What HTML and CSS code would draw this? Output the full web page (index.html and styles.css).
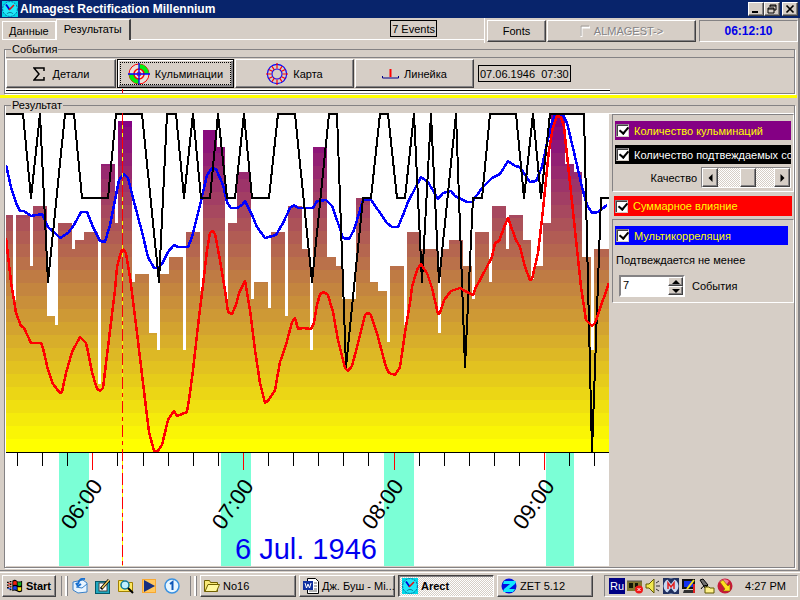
FILE: index.html
```html
<!DOCTYPE html>
<html lang="ru">
<head>
<meta charset="utf-8">
<title>Almagest Rectification Millennium</title>
<link rel="stylesheet" href="styles.css">
</head>
<body>
<svg class="defs" aria-hidden="true">
  <symbol id="clock" viewBox="0 0 16 16">
    <rect width="16" height="16" fill="#00d8e8"/>
    <circle cx="8" cy="8" r="7.4" fill="#20e8f8" stroke="#0868a0" stroke-dasharray="2 1"/>
    <path d="M4 3.500L7.500 8.500" fill="none" stroke="#0000d0" stroke-width="1.800"/>
    <path d="M7 9L12 4" stroke="#e01010" stroke-width="1.600"/>
    <path d="M5 13c1-2 5-2 6 0" fill="none" stroke="#087898"/>
  </symbol>
</svg>

<header class="titlebar">
  <svg class="app-icon"><use href="#clock"/></svg>
  <h1>Almagest Rectification Millennium</h1>
  <div class="window-buttons">
    <button class="raised" type="button" aria-label="Minimize"><svg viewBox="0 0 12 10"><path d="M2 8h6" stroke="#000" stroke-width="2"/></svg></button>
    <button class="raised" type="button" aria-label="Restore"><svg viewBox="0 0 12 10"><path d="M4 3V1h6v5H8M4 2h6M2 4h6v5H2zM2 5h6" fill="none" stroke="#000"/></svg></button>
    <button class="raised close" type="button" aria-label="Close"><svg viewBox="0 0 12 10"><path d="M2.500 1.500l7 7M9.500 1.500l-7 7" stroke="#000" stroke-width="1.700"/></svg></button>
  </div>
</header>

<main class="window">
  <div class="top-row">
    <nav class="tabs">
      <button class="tab" type="button">Данные</button>
      <button class="tab active" type="button">Результаты</button>
    </nav>
    <div class="tab-rest"><span class="boxed">7 Events</span></div>
    <div class="tools">
      <button class="raised fonts" type="button">Fonts</button>
      <button class="raised almagest" type="button" disabled><svg viewBox="0 0 10 12"><path d="M1.500 12V2.500H10" fill="none" stroke="#fff" stroke-width="2"/><path d="M1 11V1h8" fill="none" stroke="#a09c98"/></svg>ALMAGEST-&gt;</button>
      <output class="time">06:12:10</output>
    </div>
  </div>

  <fieldset class="events">
    <legend>События</legend>
    <div class="event-panel">
      <div class="event-buttons">
        <button class="raised details" type="button"><svg class="sigma" viewBox="0 0 12 14"><path d="M11 4V1H1l5 6-5 6h10v-3" fill="none" stroke="#000" stroke-width="1.500"/></svg>Детали</button>
        <button class="raised focused" type="button"><svg viewBox="0 0 22 22"><circle cx="11" cy="11" r="10" fill="#e8e0d8" stroke="#f00"/><path d="M11 1a10 10 0 0 1 10 10h-5a5 5 0 0 0-5-5zM11 21A10 10 0 0 1 1 11h5a5 5 0 0 0 5 5z" fill="#0e1"/><circle cx="11" cy="11" r="5" fill="none" stroke="#f00" stroke-width="1.500"/><circle cx="11" cy="11" r="2" fill="none" stroke="#f00"/><path d="M11 0v22M0 11h22" stroke="#00f" stroke-width="1.300"/></svg>Кульминации</button>
        <button class="raised" type="button"><svg viewBox="0 0 24 24"><circle cx="12" cy="12" r="10.500" fill="none" stroke="#00f" stroke-width="1.200"/><circle cx="12" cy="12" r="5.500" fill="none" stroke="#00f" stroke-width="1.200"/><path d="M12 0v6M12 18v6M0 12h6M18 12h6M6.500 3.500l2.500 4M17.500 3.500l-2.500 4M6.500 20.500l2.500-4M17.500 20.500l-2.500-4M3 7l4 2M21 7l-4 2M3 17l4-2M21 17l-4-2" stroke="#f00" stroke-width="1.300"/></svg>Карта</button>
        <button class="raised" type="button"><svg class="ruler" viewBox="0 0 17 10"><path d="M.5 7v2h16V7" fill="none" stroke="#008"/><path d="M8.500 0v8" stroke="#f00" stroke-width="2"/></svg>Линейка</button>
      </div>
      <time class="boxed">07.06.1946&nbsp; 07:30</time>
    </div>
    <div class="strip"><i></i></div>
  </fieldset>

  <div class="yellow-rule"></div>

  <fieldset class="result">
    <legend>Результат</legend>
    <div class="work">
      <svg id="chart" class="chart" viewBox="6 113 603 453" role="img" aria-label="6 Jul. 1946"></svg>
      <aside class="side">
        <section class="group">
          <label class="series purple"><input type="checkbox" checked>Количество кульминаций</label>
          <label class="series black"><input type="checkbox" checked>Количество подтвеждаемых со</label>
          <div class="quality">
            <label for="quality">Качество</label>
            <div class="scrollbar">
              <button class="raised" type="button" aria-label="−"><svg viewBox="0 0 5 8"><path d="M4.500 0v8L.5 4z"/></svg></button>
              <input id="quality" type="range" min="0" max="100" value="56">
              <button class="raised" type="button" aria-label="+"><svg viewBox="0 0 5 8"><path d="M.5 0v8l4-4z"/></svg></button>
            </div>
          </div>
        </section>
        <label class="series red"><input type="checkbox" checked>Суммарное влияние</label>
        <section class="group multi">
          <label class="series blue"><input type="checkbox" checked>Мультикорреляция</label>
          <label class="confirm" for="count">Подтвеждается не менее</label>
          <div class="count">
            <div class="spinner">
              <input id="count" type="text" value="7">
              <div class="spin">
                <button class="raised" type="button" aria-label="Больше"><svg viewBox="0 0 8 4"><path d="M0 4h8L4 0z"/></svg></button>
                <button class="raised" type="button" aria-label="Меньше"><svg viewBox="0 0 8 4"><path d="M0 0h8L4 4z"/></svg></button>
              </div>
            </div>
            <span>События</span>
          </div>
        </section>
      </aside>
    </div>
  </fieldset>
</main>

<footer class="taskbar">
  <button class="raised start" type="button"><svg viewBox="0 0 18 16"><path d="M0 4h2M0 7h2M0 10h2M3 3h2M3 6h2M3 9h2M3 12h2" stroke="#000" stroke-width="1.500"/><path d="M6 2q3-2 5 0t6 0v12q-3 2-6 0t-5 0z"/><path d="M7 3q2-1 4 0v4q-2-1-4 0z" fill="#f02010"/><path d="M12 3.500q2 1 4 0v4q-2 1-4 0z" fill="#10b020"/><path d="M7 8.500q2-1 4 0v4q-2-1-4 0z" fill="#1040f0"/><path d="M12 9q2 1 4 0v4q-2 1-4 0z" fill="#f8e010"/><path d="M1 5h4M1 8h4" stroke="#f02010"/><path d="M1 11h4" stroke="#1040f0"/></svg>Start</button>
  <div class="divider"></div>
  <div class="quick">
    <button type="button" aria-label="Outlook"><svg viewBox="0 0 16 16"><path d="M1 4l10-2 4 3v9l-9 1-5-3z" fill="#e8f4ff" stroke="#3880c8"/><path d="M4 9l6 1 5-4" fill="none" stroke="#3880c8"/><path d="M13 1q-6-1-7 5M4 5l2 3 3-2" fill="none" stroke="#1870d0" stroke-width="2"/></svg></button>
    <button type="button" aria-label="Desktop"><svg viewBox="0 0 16 16"><rect x=".5" y="3.500" width="14" height="12" fill="#20a8c0" stroke="#045868"/><rect x="4" y="5" width="8" height="8" fill="#fff" stroke="#444"/><path d="M6 11l8-9" stroke="#000" stroke-width="3"/><path d="M7 10l7-8" stroke="#f0d060" stroke-width="1.500"/></svg></button>
    <button type="button" aria-label="Search"><svg viewBox="0 0 16 16"><path d="M.5 13.500v-11h5l1 2h8v9z" fill="#ffe860" stroke="#a08000"/><circle cx="7" cy="7" r="4" fill="#c0f0ff" stroke="#107898" stroke-width="1.500"/><path d="M10 10l5 5" stroke="#000" stroke-width="2"/></svg></button>
    <button type="button" aria-label="Player"><svg viewBox="0 0 16 16"><path d="M1 1h14v14H1z" fill="#f8a830"/><path d="M2 2h12v12H2z" fill="#ffc860"/><path d="M3 2l11 6-11 6z" fill="#183080"/></svg></button>
    <button type="button" aria-label="1"><svg viewBox="0 0 16 16"><circle cx="8" cy="8" r="7" fill="#e8f6ff" stroke="#3890e0" stroke-width="1.500"/><path d="M6 6l2.500-2v8" fill="none" stroke="#1058b8" stroke-width="2"/></svg></button>
  </div>
  <div class="divider"></div>
  <div class="tasks">
    <button class="raised" type="button"><svg viewBox="0 0 16 16"><path d="M.5 13.500v-11h5l1 2h7v9z" fill="#f8e878" stroke="#706000"/><path d="M1 13.500l3-7h11.500l-3 7z" fill="#fff8a0" stroke="#706000"/></svg>No16</button>
    <button class="raised" type="button"><svg viewBox="0 0 16 16"><path d="M4.500.5h8l3 3v12h-11z" fill="#fff" stroke="#000"/><path d="M11 5h3M11 8h3M11 11h3M6 13h8" stroke="#666"/><path d="M0 3h10v9H0z" fill="#1030a0"/><path d="M2 5l1.500 5L5 6l1.500 4L8 5" fill="none" stroke="#fff"/></svg>Дж. Буш - Mi...</button>
    <button class="raised current" type="button"><svg><use href="#clock"/></svg>Arect</button>
    <button class="raised" type="button"><svg viewBox="0 0 16 16"><circle cx="8" cy="8" r="7.500" fill="#0010e0"/><path d="M3 3h12l-1 3-6 5h6l-2 3H2l1-3 6-5H2z" fill="#10e8ff"/></svg>ZET 5.12</button>
  </div>
  <div class="tray">
    <span class="lang">Ru</span>
    <svg viewBox="0 0 16 16"><path d="M0 3h15v10H0z" fill="#807830"/><path d="M2 5h4v5H2zM8 5h3v4H8z" fill="#101808"/><path d="M0 3h15" stroke="#555"/><circle cx="12" cy="11.500" r="4" fill="#f01818"/><path d="M10.500 10l3 3M13.500 10l-3 3" stroke="#fff"/></svg>
    <svg viewBox="0 0 16 16"><path d="M1 6h3l5-5v14l-5-5H1z" fill="#f0e850" stroke="#605800"/><path d="M11 5l3-2M11 8h4M11 11l3 2" stroke="#333"/></svg>
    <svg viewBox="0 0 16 16"><path d="M0 0h16v16H0z" fill="#203060"/><circle cx="8" cy="8" r="7.500" fill="#c8d8f0"/><path d="M4 1l4 5 4-5M4 15l4-5 4 5" fill="#203060"/><path d="M5 11V5l3 4 3-4v6" fill="none" stroke="#e02020" stroke-width="1.500"/></svg>
    <svg viewBox="0 0 16 16"><path d="M1 1h13v10H1z" fill="#101010"/><path d="M3 3h9v6H3z" fill="#1030f0"/><path d="M3 12h9l2 3H2z" fill="#303030"/><path d="M6 11l7-9" stroke="#f0e020" stroke-width="2"/><path d="M13 6v9" stroke="#e02020" stroke-width="2"/></svg>
    <svg viewBox="0 0 16 16"><path d="M1 2l3-1 5 6-3 3z" fill="#707070" stroke="#000"/><path d="M2 11q3-5 7-3" fill="none" stroke="#000"/><path d="M6 9h4l1 1h4v5H6z" fill="#fff088" stroke="#605800"/></svg>
    <svg viewBox="0 0 16 16"><circle cx="8" cy="8" r="7.500" fill="#c81838"/><path d="M2 4q5-5 10-1l-2 3z" fill="#f08098"/><path d="M3 4l3-2 5 6 2-2v7H6l2-2z" fill="#ffe020" stroke="#806000" stroke-width=".6"/></svg>
    <time>4:27 PM</time>
  </div>
</footer>
<script src="chart.js"></script>
</body>
</html>
```
FILE: styles.css
```css
:root {
  --face: #d6cec6;
  --shade: #848284;
  --dark: #424142;
  --light: #ffffff;
}

* { box-sizing: border-box; }

body {
  margin: 0;
  min-height: 100vh;
  display: flex;
  flex-direction: column;
  background: var(--face);
  color: #000;
  font: 11px/12px "Liberation Sans", Arial, sans-serif;
}

button, input {
  font: inherit;
  color: inherit;
  margin: 0;
  padding: 0;
}

button {
  border: 0;
  background: transparent;
  white-space: nowrap;
}

svg { display: block; flex: none; }
.defs { position: absolute; width: 0; height: 0; }

.raised {
  display: flex;
  align-items: center;
  justify-content: center;
  background: var(--face);
  border: 1px solid;
  border-color: var(--light) var(--dark) var(--dark) var(--light);
  box-shadow: inset -1px -1px 0 var(--shade);
}

.boxed {
  border: 1px solid #000;
  padding: 1px;
  height: 17px;
  line-height: 14px;
  white-space: pre;
}

/* Title bar */
.titlebar {
  display: flex;
  align-items: center;
  height: 18px;
  padding: 0 2px;
  background: #08246b;
  color: #fff;
}
.app-icon { width: 16px; height: 16px; }
.titlebar h1 {
  flex: 1;
  margin: 0 0 0 2px;
  font-size: 12px;
  font-weight: bold;
}
.window-buttons { display: flex; }
.window-buttons button { width: 16px; height: 14px; }
.window-buttons svg { width: 12px; height: 10px; }
.window-buttons .close { margin-left: 2px; }

/* Window body */
.window {
  flex: 1;
  display: flex;
  flex-direction: column;
  border-right: 2px solid var(--shade);
  border-bottom: 1px solid var(--shade);
  padding: 0 3px 2px 4px;
}

.top-row { display: flex; height: 25px; margin-right: -3px; }
.tabs { display: flex; align-items: flex-end; height: 22px; margin-left: -2px; }
.tab {
  height: 19px;
  padding: 0 6px;
  border: 1px solid var(--light);
}
.tab.active {
  height: 21px;
  padding: 0 7px 3px;
  border-bottom: 0;
  border-right: 2px solid var(--dark);
}
.tab-rest {
  flex: 1;
  height: 22px;
  display: flex;
  justify-content: flex-end;
  padding: 2px 47px 0 0;
  border-bottom: 1px solid var(--light);
}
.tools {
  display: flex;
  gap: 1px;
  padding: 2px 0 0 2px;
  border-left: 1px solid var(--light);
}
.tools > * { height: 22px; }
.fonts { width: 59px; }
.almagest { width: 149px; gap: 4px; color: var(--shade); text-shadow: 1px 1px 0 #fff; }
.almagest svg { width: 10px; height: 12px; }
.time {
  display: flex;
  align-items: center;
  justify-content: center;
  width: 99px;
  margin-left: 2px;
  border: 1px solid;
  border-color: var(--shade) var(--light) var(--light) var(--shade);
  color: #0000e8;
  font-size: 12px;
  font-weight: bold;
}

fieldset {
  min-width: 0;
  margin: 0;
  padding: 2px 0 0 1px;
  border: 1px solid var(--shade);
  box-shadow: inset 1px 0 0 var(--light), 1px 1px 0 var(--light);
}
legend { margin-left: 5px; padding: 0 1px; line-height: 12px; }

.event-panel {
  display: flex;
  align-items: center;
  gap: 4px;
  border-top: 1px solid var(--shade);
  padding-bottom: 1px;
}
.event-buttons { display: flex; gap: 1px; padding-top: 1px; }
.event-buttons button { width: 119px; height: 29px; gap: 5px; }
.event-buttons .details { width: 110px; gap: 8px; }
.event-buttons svg { width: 22px; height: 22px; }
.event-buttons .sigma { width: 12px; height: 14px; }
.event-buttons .ruler { width: 17px; height: 10px; }
.event-buttons .focused {
  width: 117px;
  border-color: #000;
  outline: 1px dotted #000;
  outline-offset: -4px;
  box-shadow: inset 1px 1px 0 var(--light), inset -2px -2px 0 var(--shade);
}
.strip {
  height: 4px;
  margin-right: 184px;
  background: linear-gradient(#fff 1px, #000 1px, #000 2px, #fff 2px);
}
.strip i { display: block; width: 1px; height: 4px; margin-left: 116px; background: #f00; }

.yellow-rule { height: 3px; margin: 1px -2px 1px -4px; background: #ff0; }

.result { flex: 1; }
.work { display: grid; grid-template-columns: 1fr 185px; align-items: start; }
.chart { width: 100%; height: auto; background: #fff; }

/* Side panel */
.side {
  padding-left: 3px;
  border-top: 1px solid var(--light);
}
.group {
  display: flex;
  flex-direction: column;
  border: 1px solid;
  border-color: var(--shade) var(--light) var(--light) var(--shade);
  padding: 6px 2px 3px;
}
.series {
  display: flex;
  align-items: center;
  gap: 5px;
  height: 19px;
  padding-left: 1px;
  overflow: hidden;
  white-space: nowrap;
  color: #ff0;
}
.series.purple { background: #840084; }
.series.black { background: #000; color: #fff; margin-top: 5px; }
.series.red { background: #f00; height: 20px; margin: 4px 2px 3px; }
.series.blue { background: #00f; margin-right: 3px; }

input[type="checkbox"] {
  appearance: none;
  flex: none;
  width: 13px;
  height: 13px;
  background: #fff;
  border: 1px solid;
  border-color: var(--shade) var(--face) var(--face) var(--shade);
  box-shadow: inset 1px 1px 0 var(--dark);
}
input[type="checkbox"]:checked::after {
  content: "";
  display: block;
  width: 4px;
  height: 7px;
  margin: 0 0 0 4px;
  border: solid #000;
  border-width: 0 2px 2px 0;
  transform: rotate(40deg);
}

.quality { display: flex; align-items: center; justify-content: flex-end; gap: 4px; margin-top: 3px; }
.scrollbar { display: flex; width: 90px; height: 21px; border: 1px solid; border-color: var(--shade) var(--light) var(--light) var(--shade); }
.scrollbar button { width: 16px; }
.scrollbar svg { width: 5px; height: 8px; }
.scrollbar input {
  appearance: none;
  flex: 1;
  min-width: 0;
  background: repeating-conic-gradient(#fff 0 25%, var(--face) 0 50%) 0 0 / 2px 2px;
}
.scrollbar input::-webkit-slider-thumb {
  appearance: none;
  width: 16px;
  height: 19px;
  background: var(--face);
  border: 1px solid;
  border-color: var(--light) var(--dark) var(--dark) var(--light);
  box-shadow: inset -1px -1px 0 var(--shade);
}

.multi { padding: 6px 2px 5px; }
.confirm { margin: 9px 0 9px 1px; }
.count { display: flex; align-items: center; gap: 7px; padding-left: 4px; }
.spinner {
  display: flex;
  width: 66px;
  height: 22px;
  background: #fff;
  border: 2px solid;
  border-color: var(--shade) var(--light) var(--light) var(--shade);
}
.spinner input { flex: 1; min-width: 0; padding: 0 0 2px 2px; border: 0; background: transparent; }
.spin { display: flex; flex-direction: column; width: 15px; }
.spin button { flex: 1; }
.spin svg { width: 8px; height: 4px; }

/* Taskbar */
.taskbar {
  display: flex;
  align-items: center;
  gap: 4px;
  height: 28px;
  padding: 0 2px 1px;
  margin-top: 1px;
  border-top: 1px solid var(--light);
}
.taskbar button svg, .tray svg { width: 16px; height: 16px; }
.start { width: 54px; height: 22px; gap: 3px; font-weight: bold; }
.divider { width: 6px; height: 20px; margin-left: 1px; border-left: 1px solid var(--shade); border-right: 2px solid var(--light); box-shadow: 1px 0 0 var(--shade); }
.quick { display: flex; gap: 7px; padding: 0 5px 0 1px; }
.tasks { display: flex; gap: 3px; flex: 1; }
.tasks button { flex: 0 1 96px; height: 22px; justify-content: flex-start; gap: 3px; padding-left: 3px; overflow: hidden; }
.tasks .current {
  font-weight: bold;
  border-color: var(--dark) var(--light) var(--light) var(--dark);
  box-shadow: inset 1px 1px 0 var(--shade);
  background: repeating-conic-gradient(#fff 0 25%, var(--face) 0 50%) 0 0 / 2px 2px;
}
.tray {
  display: flex;
  align-items: center;
  gap: 2px;
  width: 194px;
  height: 22px;
  padding: 0 11px 0 4px;
  border: 1px solid;
  border-color: var(--shade) var(--light) var(--light) var(--shade);
}
.lang { width: 16px; height: 16px; line-height: 16px; text-align: center; background: #000084; color: #fff; }
.tray time { margin-left: auto; }

/* Chart text */
.hour { font-size: 22px; fill: #000; }
.date { font-size: 29px; fill: #0000f0; }
```
FILE: chart.js
```js
const TOP = 113, BASE = 452, BAND = 13, RIGHT = 609;

// Histogram profile: left edge and top of each step.
const steps = [
  [6,215],[13,300],[16,215],[30,266],[33,206],[47,316],[55,325],[58,223],[72,249],[75,240],[84,232],
  [98,384],[101,164],[115,223],[118,121],[132,282],[135,274],[149,333],[157,350],[160,274],[169,257],
  [183,350],[186,232],[200,291],[203,130],[217,147],[225,299],[228,223],[237,172],[251,299],[254,282],
  [268,308],[271,232],[285,316],[288,206],[302,249],[310,350],[313,147],[327,257],[336,266],[342,299],
  [356,198],[370,282],[378,291],[387,342],[390,266],[404,325],[407,232],[421,249],[438,333],[441,249],
  [449,240],[463,266],[472,299],[475,232],[489,282],[492,206],[506,249],[509,215],[523,240],[531,279],
  [534,266],[543,223],[551,113],[565,164],[574,172],[582,257],[591,350],[594,249]
];

const black = "6,114 23,114 31,198 40,114 48,282 65,114 74,114 82,198 108,198 116,114 142,114 159,282 167,114 176,114 184,198 193,114 201,198 210,198 218,114 227,198 235,198 244,114 252,198 269,198 278,114 295,114 312,282 329,114 337,114 346,367 363,198 371,198 380,114 388,114 397,198 405,198 414,114 422,282 431,114 439,282 456,114 465,367 473,198 482,198 490,114 516,114 524,198 533,114 541,198 550,114 584,114 592,452 601,198 609,198";

const blue = "6,165 11,187 16,203 20,211 24,211 31,216 42,214 48,227 55,233 60,238 68,233 74,225 81,212 87,212 93,227 100,241 105,242 110,225 115,200 119,180 124,174 128,178 133,198 142,232 148,257 154,268 158,268 162,264 168,252 174,245 178,247 188,247 192,237 200,205 207,175 212,168 216,169 223,185 227,202 231,208 237,208 242,205 245,201 252,215 257,227 265,238 276,235 283,223 290,208 294,205 298,208 313,208 317,201 326,200 332,206 337,220 343,238 349,239 354,230 360,210 363,200 371,200 378,210 387,223 392,227 398,227 403,215 408,202 421,177 428,182 438,199 443,193 451,191 455,196 467,202 472,202 482,188 492,178 500,174 508,161 515,166 520,167 525,175 530,182 536,181 542,167 547,143 552,122 555,115 563,115 567,123 573,148 582,187 587,205 592,213 598,212 607,205";

const red = "6,238 11,282 16,313 21,326 24,328 31,343 41,343 43,348 48,370 53,384 60,393 62,392 66,373 72,352 80,337 86,343 88,352 92,372 97,389 100,391 103,388 108,347 115,290 117,267 121,252 123,249 126,253 130,277 137,333 143,383 149,432 154,451 158,451 162,445 168,420 174,411 177,416 187,412 189,400 193,370 199,317 203,285 207,250 210,233 213,231 215,234 220,260 225,290 228,312 232,314 236,305 239,293 245,281 250,310 255,350 260,383 265,403 268,401 275,390 280,362 286,345 292,322 295,318 298,329 303,328 311,329 314,323 317,305 320,294 324,292 328,295 333,312 338,340 345,368 348,371 352,366 357,347 365,315 368,313 371,315 378,337 386,367 389,373 395,375 400,367 405,333 410,303 412,287 417,270 421,264 427,273 432,288 438,314 440,313 444,300 451,291 460,288 465,291 473,295 476,287 480,280 492,257 495,243 499,241 505,225 508,218 516,240 520,247 525,267 530,280 532,279 538,253 543,210 549,150 553,127 557,116 561,117 564,127 570,183 581,287 586,320 592,326 595,323 603,300 609,283";

const hours = [[92, "06:00"], [243, "07:00"], [393, "08:00"], [544, "09:00"]];
const zones = [[59, 30], [221, 30], [384, 30], [546, 28]];

const rect = (x, y, w, h, fill) =>
  `<rect x="${x}" y="${y}" width="${w}" height="${h}" fill="${fill}"/>`;

function bandColor(y) {
  const t = Math.min(1, Math.max(0, (y - TOP) / (BASE - TOP - BAND)));
  return `rgb(${Math.round(132 + 123 * t)},${Math.round(255 * t)},${Math.round(132 * (1 - t))})`;
}

let out = "";
steps.forEach(([x, top], i) => {
  const width = (steps[i + 1] || [RIGHT])[0] - x;
  for (let y = BASE - BAND; y > top - BAND; y -= BAND) {
    const from = Math.max(y, top);
    out += rect(x, from, width, y + BAND - from, bandColor(y));
  }
});
zones.forEach(([x, w]) => { out += rect(x, 453, w, 114, "#7bffd6"); });
out += rect(6, 452, 603, 1, "#000");
for (let k = 0; k < 24; k++) {
  const x = 17 + Math.round(k * 25.1);
  const isHour = k % 6 === 3;
  out += rect(x, 453, 1, isHour ? 17 : 13, isHour ? "#f00" : "#000");
}
const line = (points, color, width) =>
  `<polyline points="${points}" fill="none" stroke="${color}" stroke-width="${width}" stroke-linejoin="round"/>`;
out += line(blue, "#00f", 2.5) + line(black, "#000", 2) + line(red, "#f00", 2.5);

// Time cursor: red dash-dot over yellow.
out += rect(122, TOP, 1, 454, "#ff0");
for (let y = TOP; y < 567; y += 24) {
  out += rect(122, y, 1, 12, "#f00") + rect(122, y + 16, 1, 4, "#f00");
}
hours.forEach(([x, text]) => {
  out += `<text class="hour" transform="translate(${x - 20} 531) rotate(-55)">${text}</text>`;
});
out += '<text class="date" x="235" y="559">6 Jul. 1946</text>';

const chart = document.getElementById("chart");
chart.setAttribute("shape-rendering", "crispEdges");
chart.innerHTML = out;
```
